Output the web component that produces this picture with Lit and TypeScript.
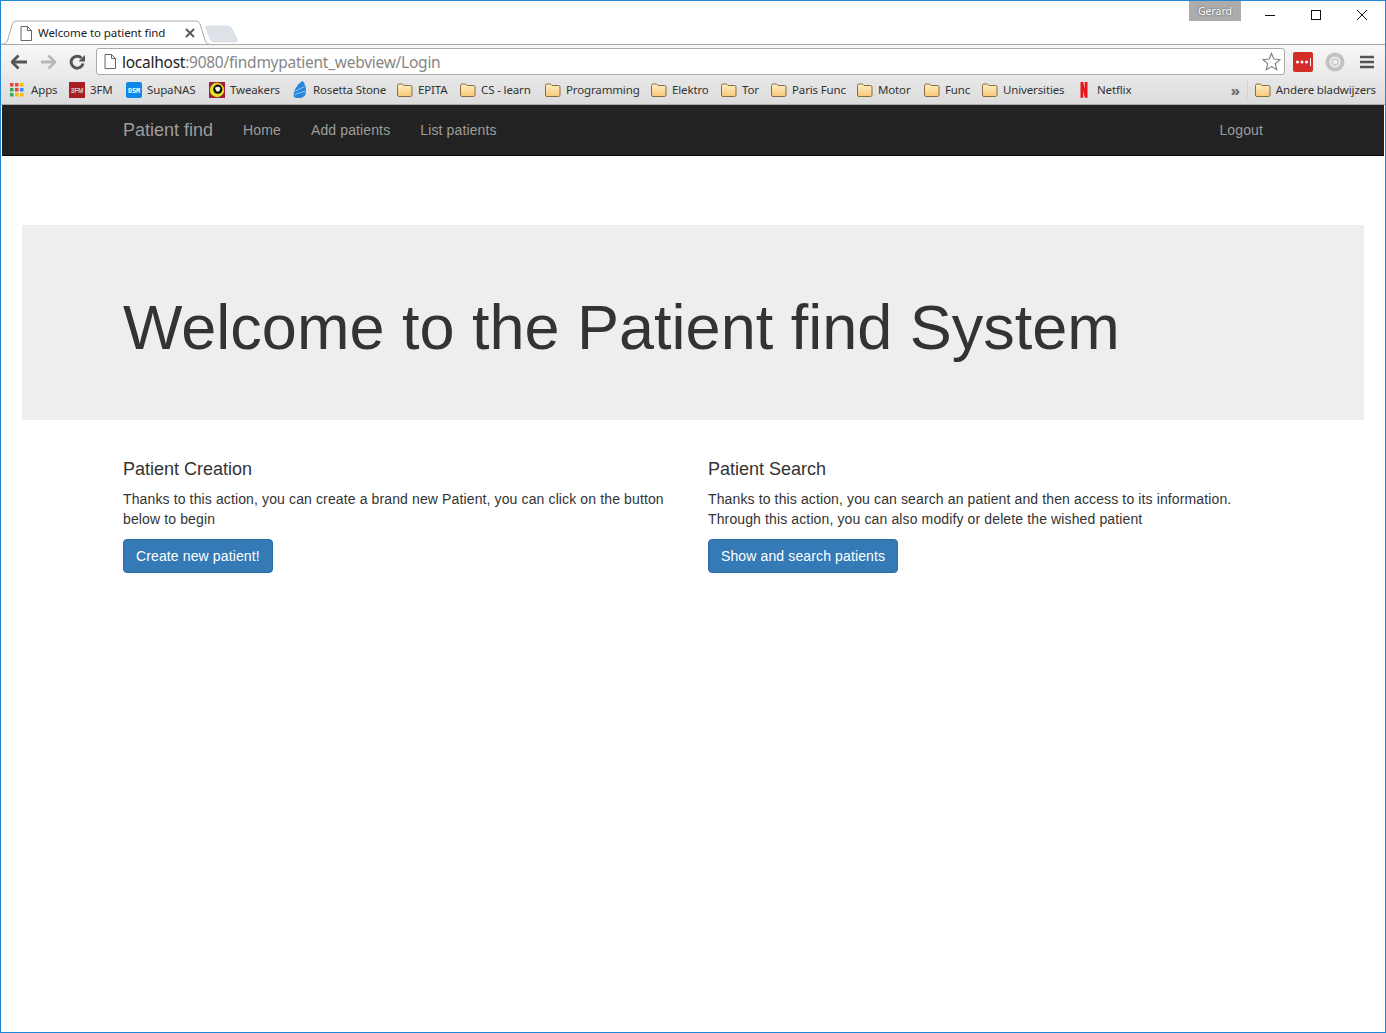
import { LitElement, html, css, svg } from "lit";
import { customElement } from "lit/decorators.js";

const folder = svg`<svg class="ico" viewBox="0 0 16 16"><defs><linearGradient id="fg" x1="0" y1="0" x2="0" y2="1"><stop offset="0" stop-color="#fdeec4"/><stop offset="1" stop-color="#f8c878"/></linearGradient></defs><path d="M.5 3.500 Q.5 2 2 2 H5.500 L7 3.500 H13.500 Q15 3.500 15 5 V13 Q15 14.500 13.500 14.500 H2 Q.5 14.500 .5 13 Z" fill="url(#fg)" stroke="#8a6d45" stroke-width="1"/></svg>`;

const apps = svg`<svg class="ico" viewBox="0 0 16 16">${[
  ["#ea4335", "#ea4335", "#fbbc05"],
  ["#34a853", "#ea4335", "#4285f4"],
  ["#34a853", "#fbbc05", "#fbbc05"],
].map((row, y) => row.map((c, x) => svg`<rect x=${x * 5} y=${1 + y * 5} width="3.500" height="3.500" fill=${c}/>`))}</svg>`;

const fm = svg`<svg class="ico" viewBox="0 0 16 16"><rect width="16" height="16" fill="#a91e22"/><text x="8" y="10.500" font-size="6.500" font-family="Liberation Sans" font-weight="700" text-anchor="middle" fill="#d9c9b8">3FM</text></svg>`;
const dsm = svg`<svg class="ico" viewBox="0 0 16 16"><rect width="16" height="16" rx="2" fill="#0f87ea"/><text x="8" y="10.600" font-size="6.800" font-family="DejaVu Sans Mono" font-weight="700" text-anchor="middle" fill="#fff">DSM</text></svg>`;
const tw = svg`<svg class="ico" viewBox="0 0 16 16"><rect width="16" height="16" fill="#a31c3c"/><circle cx="8" cy="8" r="7.200" fill="#dfe22a"/><circle cx="8.800" cy="7.200" r="4.600" fill="#111"/><path d="M6 5.800 L8.800 4.400 L11.500 5.800 L10.600 8.600 L8.800 10 L7 8.600 Z" fill="#f4f4f4"/></svg>`;
const rosetta = svg`<svg class="ico" viewBox="0 0 16 16" style="overflow:visible"><path d="M10.500 -1 C14 2 15 9 13 13.500 C11 16.500 3.500 17 1.800 14.500 C.8 10.500 4.500 2.500 10.500 -1 Z" fill="#2a86dc"/><path d="M3.500 9 L12.500 4.500 M2.800 12.500 L13.500 9" stroke="#8cc6f4" stroke-width="1" fill="none"/></svg>`;
const netflix = svg`<svg class="ico" viewBox="0 0 16 16"><path d="M4.500 0 H7.300 L8.700 7 V0 H11.500 V16 L8.700 15.400 L7.300 8 V15.400 L4.500 16 Z" fill="#e8141c"/></svg>`;

interface Mark { icon: unknown; label: string; width: number; }
const marks: Mark[] = [
  { icon: apps, label: "Apps", width: 59 },
  { icon: fm, label: "3FM", width: 57 },
  { icon: dsm, label: "SupaNAS", width: 83 },
  { icon: tw, label: "Tweakers", width: 83 },
  { icon: rosetta, label: "Rosetta Stone", width: 105 },
  { icon: folder, label: "EPITA", width: 63 },
  { icon: folder, label: "CS - learn", width: 85 },
  { icon: folder, label: "Programming", width: 106 },
  { icon: folder, label: "Elektro", width: 70 },
  { icon: folder, label: "Tor", width: 50 },
  { icon: folder, label: "Paris Func", width: 86 },
  { icon: folder, label: "Motor", width: 67 },
  { icon: folder, label: "Func", width: 58 },
  { icon: folder, label: "Universities", width: 94 },
  { icon: netflix, label: "Netflix", width: 70 },
];

@customElement("app-root")
export class AppRoot extends LitElement {
  static styles = css`
    :host {
      display: flex;
      flex-direction: column;
      box-sizing: border-box;
      width: 1386px;
      height: 1033px;
      overflow: hidden;
      background: #fff;
      border: 1px solid #1e88d8;
      font-family: "Liberation Sans", Arial, sans-serif;
      color: #333;
      font-size: 14px;
      line-height: 20px;
      letter-spacing: 0.125px;
    }
    .chromefont { font-family: "Noto Sans", "Open Sans", sans-serif; letter-spacing: 0; }
    .strip {
      position: relative;
      display: flex;
      flex: none;
      height: 44px;
      box-sizing: border-box;
      border-bottom: 1px solid #aaa;
    }
    .tabshape {
      position: absolute;
      left: 0;
      top: 19px;
      width: 240px;
      height: 25px;
    }
    .tab {
      position: relative;
      display: flex;
      align-items: center;
      align-self: flex-start;
      margin: 23px 0 0 19px;
      width: 175px;
      height: 18px;
      font-size: 11.500px;
      letter-spacing: -0.08px;
      color: #222;
      white-space: nowrap;
    }
    .tab .page { width: 12px; height: 15px; margin-right: 6px; flex: none; }
    .tab .title { flex: 1; }
    .tab .x { width: 10px; height: 10px; flex: none; }
    .right { margin-left: auto; display: flex; align-items: flex-start; }
    .gerard {
      width: 52px;
      height: 20px;
      margin-right: 6px;
      background: #acacac;
      color: #fff;
      font-size: 10.500px;
      line-height: 20px;
      text-align: center;
      text-shadow: 0 0 2px #444;
    }
    .win {
      width: 46px;
      height: 28px;
      display: flex;
      align-items: center;
      justify-content: center;
    }
    .win svg { width: 12px; height: 12px; }
    .toolbar {
      flex: none;
      height: 33px;
      display: flex;
      align-items: center;
      background: linear-gradient(#f7f7f7, #e9e9e9);
    }
    .tool { width: 16px; height: 16px; flex: none; margin-left: 10px; }
    .tool + .tool { margin-left: 13px; }
    .omni {
      flex: none;
      box-sizing: border-box;
      width: 1189px;
      height: 27px;
      margin: 0 0 0 11px;
      display: flex;
      align-items: center;
      padding: 0 4px 0 7px;
      background: #fff;
      border: 1px solid #ababab;
      border-radius: 3px;
      font-size: 15.500px;
      letter-spacing: -0.26px;
      white-space: nowrap;
      color: #868686;
    }
    .omni b { font-weight: 400; color: #222; }
    .omni .page { width: 12px; height: 15px; margin-right: 6px; }
    .omni .star { margin-left: auto; margin-right: -1px; width: 19px; height: 19px; }
    .ext { width: 20px; height: 20px; flex: none; margin-left: 8px; }
    .ext + .ext { margin-left: 12px; }
    .bars { width: 14px; height: 14px; flex: none; margin-left: 15px; }
    .marks {
      flex: none;
      height: 27px;
      box-sizing: border-box;
      display: flex;
      align-items: center;
      padding: 0 0 2px 9px;
      background: linear-gradient(#e7e7e7, #dcdcdc);
      border-bottom: 1px solid #a8a8a8;
      font-size: 11.500px;
      letter-spacing: -0.14px;
      color: #333;
      white-space: nowrap;
    }
    .mark { display: flex; align-items: center; gap: 5px; flex: none; }
    .ico { width: 16px; height: 16px; flex: none; }
    .more { margin-left: auto; font-size: 15px; font-weight: 700; color: #666; line-height: 16px; }
    .sep { width: 1px; height: 18px; background: #cfd2d6; margin: 0 7px 0 7px; }
    .last { margin-right: 9px; }
    .navbar {
      flex: none;
      height: 51px;
      margin: 0 1px;
      box-sizing: border-box;
      background: #222;
      border-bottom: 1px solid #080808;
    }
    .container {
      box-sizing: border-box;
      width: 1170px;
      margin: 0 auto;
      padding: 0 15px;
    }
    .navin { display: flex; height: 50px; padding: 0; }
    .navin a { padding: 15px; color: #9d9d9d; text-decoration: none; }
    .navin .brand { font-size: 18px; letter-spacing: 0; }
    .navin .logout { margin-left: auto; }
    .jumbo {
      flex: none;
      margin: 69px 21px 30px;
      padding: 48px 0;
      background: #eee;
    }
    h1 {
      margin: 20px 0 10px;
      font-size: 63px;
      font-weight: 500;
      line-height: 1.1;
      letter-spacing: 0;
    }
    .row { display: flex; }
    .col { box-sizing: border-box; width: 585px; flex: none; padding-right: 30px; }
    h4 {
      margin: 10px 0 9px;
      font-size: 18px;
      font-weight: 500;
      line-height: 1.1;
      letter-spacing: 0;
    }
    p { margin: 0 0 10px; }
    .btn {
      display: inline-block;
      padding: 6px 12px;
      color: #fff;
      background: #337ab7;
      border: 1px solid #2e6da4;
      border-radius: 4px;
      letter-spacing: 0.125px;
    }
  `;

  private page() {
    return html`<svg class="page" viewBox="0 0 12 15"><path d="M1 .5 H7.500 L11.500 4.500 V14.500 H1 Z M7.500 .5 V4.500 H11.500" fill="#fff" stroke="#666" stroke-width="1"/></svg>`;
  }

  render() {
    return html`
      <div class="strip chromefont">
        <svg class="tabshape" viewBox="0 0 240 25">
          <path d="M1 24 C5 24 6 22 7 19 L11 5 C12 2 13 1 16 1 H194 C197 1 198 2 199 4 L204 20 C205 23 206 24 208 24" fill="#fff" stroke="#aaa"/>
          <path d="M207 6 H226 C229 6 230 7 231 9 L236 19 C237 21 236 22 234 22 H213 C211 22 210 21 209 19 L205 8 C204.500 6.500 205 6 207 6 Z" fill="#dde1e8" stroke="#cfd3da" stroke-width=".5"/>
        </svg>
        <div class="tab">
          ${this.page()}
          <span class="title">Welcome to patient find</span>
          <svg class="x" viewBox="0 0 10 10"><path d="M1 1 L9 9 M9 1 L1 9" stroke="#555" stroke-width="1.800"/></svg>
        </div>
        <div class="right">
          <div class="gerard">Gerard</div>
          <div class="win"><svg viewBox="0 0 12 12"><path d="M1 6.500 H11" stroke="#111"/></svg></div>
          <div class="win"><svg viewBox="0 0 12 12"><rect x="1.500" y="1.500" width="9" height="9" fill="none" stroke="#111"/></svg></div>
          <div class="win"><svg viewBox="0 0 12 12"><path d="M1 1 L11 11 M11 1 L1 11" stroke="#111"/></svg></div>
        </div>
      </div>
      <div class="toolbar chromefont">
        <svg class="tool" viewBox="0 0 16 16"><path d="M16 8 H3" fill="none" stroke="#555" stroke-width="3"/><path d="M7.500 1.500 L1 8 L7.500 14.500" fill="none" stroke="#555" stroke-width="2.800"/></svg>
        <svg class="tool" viewBox="0 0 16 16"><path d="M1 8 H13" fill="none" stroke="#b8b8b8" stroke-width="3"/><path d="M8.500 1.500 L15 8 L8.500 14.500" fill="none" stroke="#b8b8b8" stroke-width="2.800"/></svg>
        <svg class="tool" viewBox="0 0 16 16"><path d="M14 9.500 A6 6 0 1 1 12.500 4" fill="none" stroke="#555" stroke-width="3"/><path d="M9.500 7.500 H16 V1 Z" fill="#555"/></svg>
        <div class="omni">
          ${this.page()}
          <span><b>localhost</b>:9080/findmypatient_webview/Login</span>
          <svg class="star" viewBox="0 0 20 20"><path d="M10 1.500 L12.500 7.500 L19 8 L14 12.300 L15.600 18.700 L10 15.300 L4.400 18.700 L6 12.300 L1 8 L7.500 7.500 Z" fill="#fff" stroke="#777" stroke-width="1.100"/></svg>
        </div>
        <svg class="ext" viewBox="0 0 20 20"><rect width="20" height="20" rx="2" fill="#d32d27"/><circle cx="4.500" cy="10" r="1.500" fill="#fff"/><circle cx="9" cy="10" r="1.500" fill="#fff"/><circle cx="13.500" cy="10" r="1.500" fill="#fff"/><path d="M17.500 6 V14" stroke="#fff"/></svg>
        <svg class="ext" viewBox="0 0 20 20"><circle cx="10" cy="10" r="7.500" fill="none" stroke="#c2c2c2" stroke-width="4"/><circle cx="10" cy="10" r="3" fill="none" stroke="#c9c9c9" stroke-width="1.500"/></svg>
        <svg class="bars" viewBox="0 0 14 14"><path d="M0 2 H14 M0 7 H14 M0 12 H14" stroke="#555" stroke-width="2.400"/></svg>
      </div>
      <div class="marks chromefont">
        ${marks.map((m) => html`<div class="mark" style="width:${m.width}px">${m.icon}<span>${m.label}</span></div>`)}
        <span class="more">»</span>
        <span class="sep"></span>
        <div class="mark last">${folder}<span>Andere bladwijzers</span></div>
      </div>
      <nav class="navbar">
        <div class="container navin">
          <a class="brand">Patient find</a>
          <a>Home</a>
          <a>Add patients</a>
          <a>List patients</a>
          <a class="logout">Logout</a>
        </div>
      </nav>
      <div class="jumbo">
        <div class="container"><h1>Welcome to the Patient find System</h1></div>
      </div>
      <div class="container">
        <div class="row">
          <div class="col">
            <h4>Patient Creation</h4>
            <p>Thanks to this action, you can create a brand new Patient, you can click on the button below to begin</p>
            <a class="btn">Create new patient!</a>
          </div>
          <div class="col">
            <h4>Patient Search</h4>
            <p>Thanks to this action, you can search an patient and then access to its information. Through this action, you can also modify or delete the wished patient</p>
            <a class="btn">Show and search patients</a>
          </div>
        </div>
      </div>
    `;
  }
}
